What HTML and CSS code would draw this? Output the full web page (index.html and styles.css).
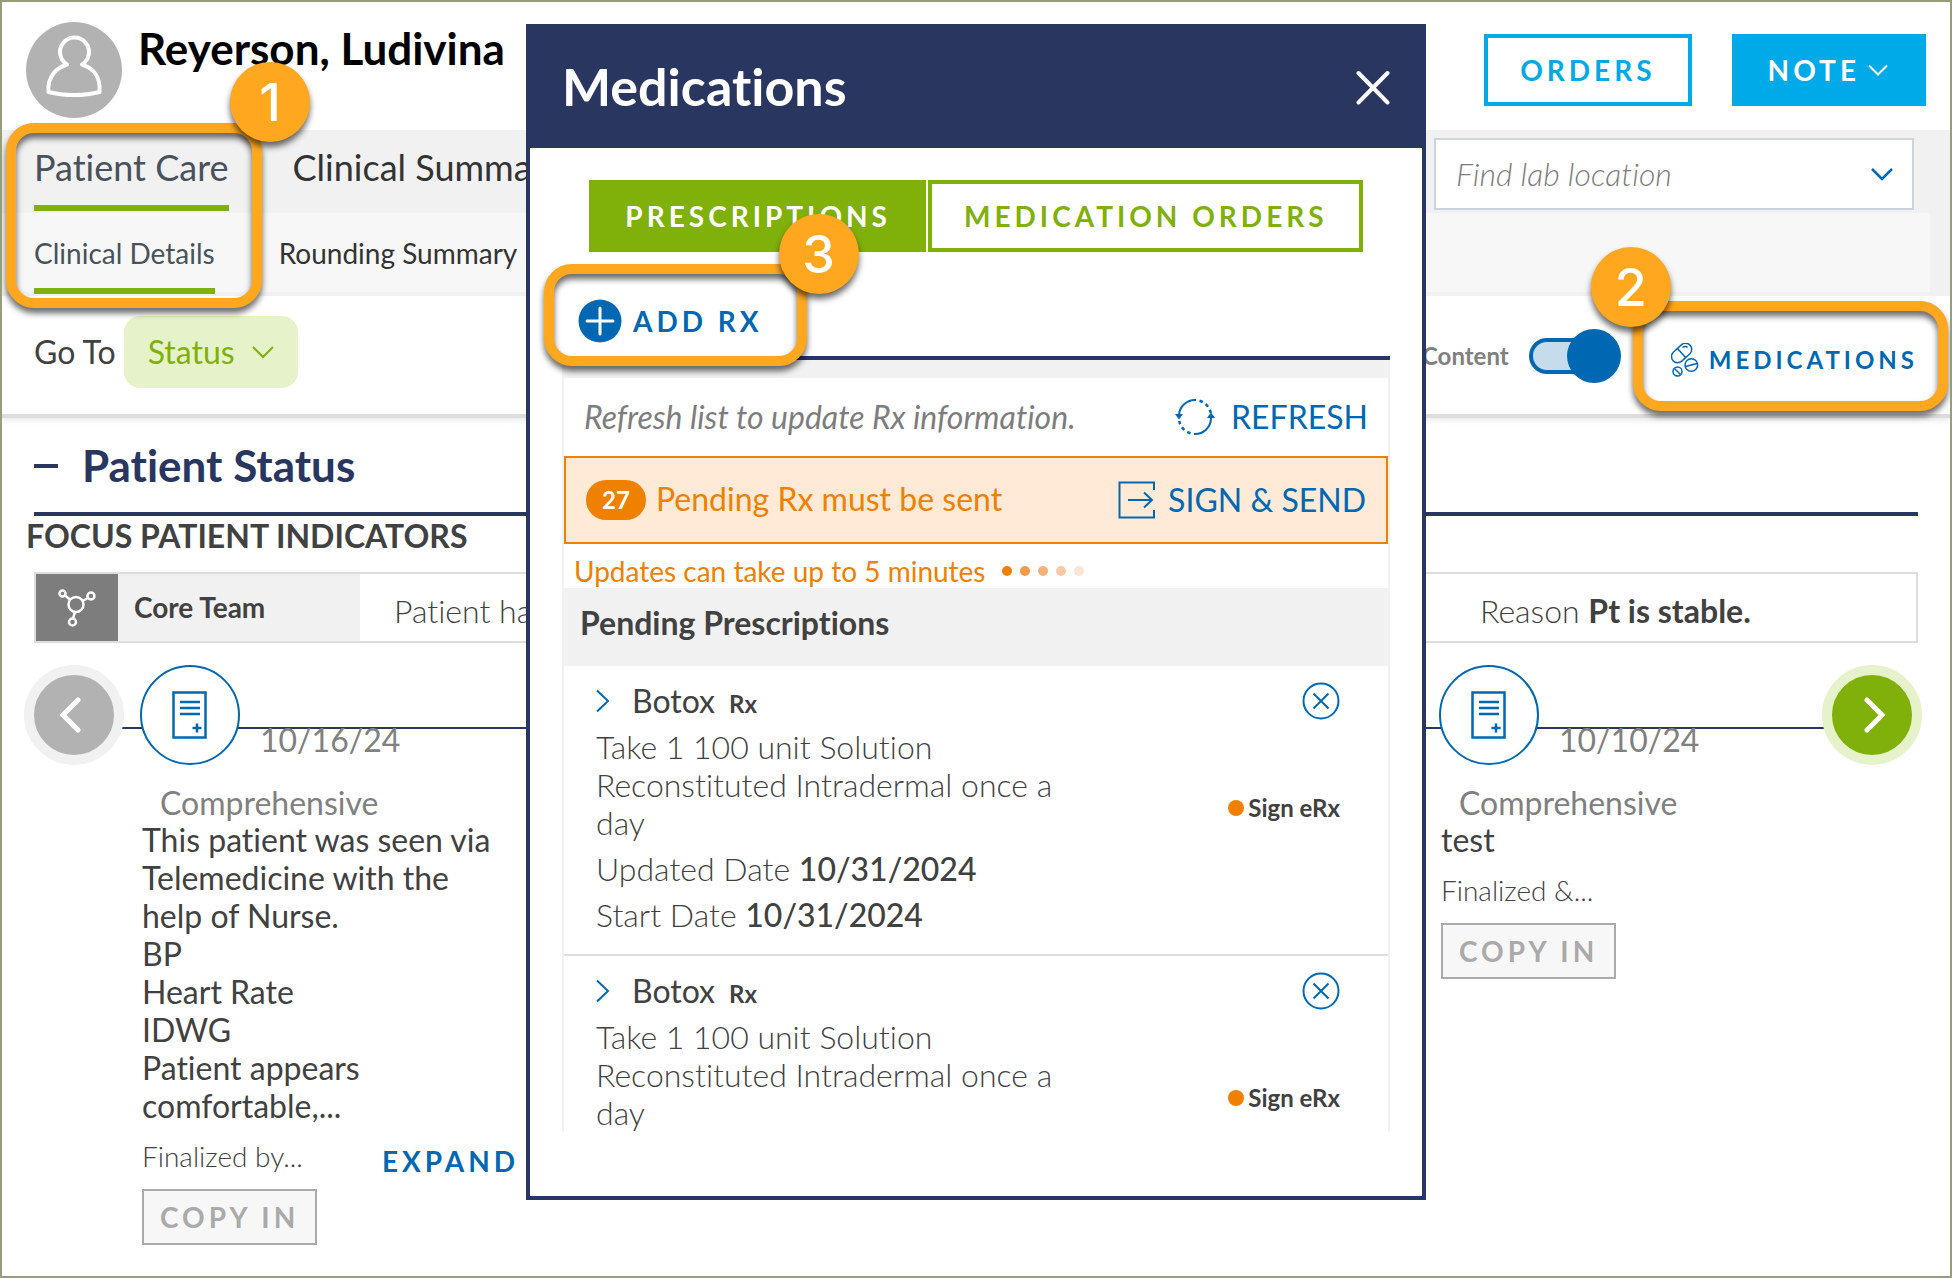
FILE: index.html
```html
<!DOCTYPE html>
<html lang="en">

<head>
  <meta charset="utf-8">
  <title>Patient Care</title>
  <link rel="stylesheet" href="styles.css">
</head>

<body>
  <div class="page">
    <header class="patient">
      <svg class="avatar" viewBox="0 0 96 96">
        <circle cx="48" cy="48" r="48" fill="#b2b2b2"/>
        <path d="M41 42.500a14.500 14.500 0 1 1 15 0c9.500 3 19 11 17.500 27.500-15 4-36 4-51 0C21 53.500 31.500 45.500 41 42.500z" fill="none" stroke="#fff" stroke-width="4" stroke-linejoin="round"/>
      </svg>
      <h1 class="patient-name">Reyerson, Ludivina</h1>
      <div class="patient-actions">
        <button class="btn btn-outline">ORDERS</button>
        <button class="btn btn-solid">NOTE
          <svg width="20" height="12" viewBox="0 0 20 12"><path d="M1 1.500l9 9 9-9" fill="none" stroke="currentColor" stroke-width="2"/></svg>
        </button>
      </div>
    </header>

    <nav class="tabs">
      <div class="tabs-row">
        <a class="tab active" href="#care">Patient Care</a>
        <a class="tab" href="#summary">Clinical Summary</a>
        <div class="lab-select">
          <select aria-label="Find lab location">
            <option>Find lab location</option>
          </select>
          <svg width="24" height="14" viewBox="0 0 24 14"><path d="M2 2l10 10L22 2" fill="none" stroke="#0068b3" stroke-width="2.500"/></svg>
        </div>
      </div>
      <div class="tabs-row subtabs">
        <a class="tab active" href="#details">Clinical Details</a>
        <a class="tab" href="#rounding">Rounding Summary</a>
      </div>
      <div class="callout callout-tabs">
        <div class="callout-frame"></div>
        <span class="callout-num">1</span>
      </div>
    </nav>

    <div class="toolbar">
      <label for="goto">Go To</label>
      <div class="goto-select">
        <select id="goto">
          <option>Status</option>
        </select>
        <svg width="24" height="14" viewBox="0 0 24 14"><path d="M2 2l10 10L22 2" fill="none" stroke="#80b00a" stroke-width="2"/></svg>
      </div>
      <div class="toolbar-right">
        <label class="content-label" for="content">Content</label>
        <input class="toggle" type="checkbox" id="content" checked>
        <div class="meds-wrap">
          <a class="meds-link" href="#medications">
            <svg width="28" height="34" viewBox="0 0 28 34" fill="none" stroke="#0068b3" stroke-width="1.500">
              <rect x="-11.500" y="-6.200" width="23" height="12.400" rx="6.200" transform="translate(10.600 10) rotate(-42)"/>
              <path d="M6.500 5.500l8 9M11.500 4.500c2-1.500 3.500-1.500 5 0"/>
              <circle cx="20.300" cy="22" r="6.300"/>
              <path d="M14.500 23.500l11.500-3"/>
              <circle cx="6.500" cy="28.500" r="4.500"/>
              <path d="M3.500 25.500l6 6"/>
            </svg>
            MEDICATIONS
          </a>
          <div class="callout callout-meds">
            <div class="callout-frame"></div>
            <span class="callout-num">2</span>
          </div>
        </div>
      </div>
    </div>

    <main>
      <div class="section-head">
        <button class="collapse" aria-label="Collapse"></button>
        <h2>Patient Status</h2>
      </div>
      <h3 class="focus-title">FOCUS PATIENT INDICATORS</h3>
      <div class="indicator">
        <div class="indicator-icon">
          <svg width="38" height="38" viewBox="0 0 38 38" fill="none" stroke="#fff" stroke-width="2.500">
            <circle cx="18" cy="15.500" r="7.500"/>
            <circle cx="4.500" cy="4.500" r="3"/>
            <circle cx="33" cy="7" r="3.500"/>
            <circle cx="14.500" cy="33" r="3.500"/>
            <path d="M7 6.500l5 4M24.500 12l5.500-3M17 23l-2 6.500"/>
          </svg>
        </div>
        <div class="indicator-label">Core Team</div>
        <div class="indicator-text">Patient has</div>
        <div class="indicator-reason">Reason <b>Pt is stable.</b></div>
      </div>

      <div class="visits">
        <button class="round-btn prev" aria-label="Previous">
          <svg width="30" height="36" viewBox="0 0 30 36"><path d="M19 3L4 18l15 15" fill="none" stroke="#fff" stroke-width="5" stroke-linecap="round"/></svg>
        </button>
        <article class="visit">
          <div class="visit-head">
            <div class="visit-icon">
              <svg width="36" height="48" viewBox="0 0 36 48" fill="none" stroke="#0068b3" stroke-width="2.500">
                <rect x="1.500" y="1.500" width="32" height="45"/>
                <path d="M8 11h20M8 17h20M8 23h20M25 32.500v9M20.500 37h9"/>
              </svg>
            </div>
            <time>10/16/24</time>
          </div>
          <p class="visit-type">Comprehensive</p>
          <p class="visit-note">This patient was seen via Telemedicine with the help of Nurse.<br>BP<br>Heart Rate<br>IDWG<br>Patient appears comfortable,...</p>
          <div class="visit-foot">
            <div class="visit-status">
              <p>Finalized by...</p>
              <button class="copy-btn" disabled>COPY IN</button>
            </div>
            <a class="expand" href="#expand">EXPAND</a>
          </div>
        </article>
        <article class="visit last">
          <div class="visit-head">
            <div class="visit-icon">
              <svg width="36" height="48" viewBox="0 0 36 48" fill="none" stroke="#0068b3" stroke-width="2.500">
                <rect x="1.500" y="1.500" width="32" height="45"/>
                <path d="M8 11h20M8 17h20M8 23h20M25 32.500v9M20.500 37h9"/>
              </svg>
            </div>
            <time>10/10/24</time>
          </div>
          <p class="visit-type">Comprehensive</p>
          <p class="visit-note">test</p>
          <div class="visit-foot">
            <div class="visit-status">
              <p>Finalized &amp;...</p>
              <button class="copy-btn" disabled>COPY IN</button>
            </div>
          </div>
        </article>
        <button class="round-btn next" aria-label="Next">
          <svg width="30" height="36" viewBox="0 0 30 36"><path d="M10 3l15 15-15 15" fill="none" stroke="#fff" stroke-width="5" stroke-linecap="round"/></svg>
        </button>
      </div>
    </main>

    <div class="overlay">
      <section class="modal" role="dialog" aria-labelledby="modal-title">
        <div class="modal-head">
          <h2 id="modal-title">Medications</h2>
          <button class="modal-close" aria-label="Close">
            <svg width="34" height="38" viewBox="0 0 34 38"><path d="M2.500 6l29 29.500M31.500 6L2.500 35.500" stroke="#fff" stroke-width="4" stroke-linecap="round"/></svg>
          </button>
        </div>
        <div class="modal-tabs">
          <button class="modal-tab selected">PRESCRIPTIONS</button>
          <button class="modal-tab">MEDICATION ORDERS</button>
        </div>
        <div class="add-row">
          <div class="add-wrap">
            <button class="add-btn">
              <svg width="44" height="44" viewBox="0 0 44 44"><circle cx="22" cy="22" r="21.500" fill="#0068b3"/><path d="M22 9v26M9 22h26" stroke="#fff" stroke-width="3" stroke-linecap="round"/></svg>
              ADD RX
            </button>
            <div class="callout callout-add">
              <div class="callout-frame"></div>
              <span class="callout-num">3</span>
            </div>
          </div>
        </div>

        <div class="rx-list">
          <div class="refresh-row">
            <em>Refresh list to update Rx information.</em>
            <button class="link-btn">
              <svg width="40" height="38" viewBox="0 0 40 38" fill="none" stroke="#0068b3" stroke-width="2">
                <path d="M4 17A16 16 0 0 1 21 2"/>
                <path d="M24.500 2.800a16 16 0 0 1 11.500 13" stroke-width="2.500" stroke-dasharray="3.500 3.500"/>
                <path d="M36 20a16 16 0 0 1-17 16"/>
                <path d="M15.500 35.200A16 16 0 0 1 4 22" stroke-width="2.500" stroke-dasharray="3.500 3.500"/>
                <path d="M0 16h8L4 21.500zM32 20h8L36 14.500z" fill="#0068b3" stroke="none"/>
              </svg>
              REFRESH
            </button>
          </div>
          <div class="alert">
            <span class="count">27</span>
            <span class="alert-text">Pending Rx must be sent</span>
            <button class="link-btn">
              <svg width="38" height="38" viewBox="0 0 38 38" fill="none" stroke="#0068b3" stroke-width="2">
                <path d="M36 9V1.500H1.500v35H36V29M10 19h24M26 11.500l8 7.500-8 7.500"/>
              </svg>
              SIGN &amp; SEND
            </button>
          </div>
          <div class="updates">Updates can take up to 5 minutes
            <span class="dots"><i></i><i></i><i></i><i></i><i></i></span>
          </div>
          <h3 class="list-title">Pending Prescriptions</h3>

          <div class="rx">
            <div class="rx-info">
              <div class="rx-name">
                <button class="icon-btn" aria-label="Open Botox"><svg width="14" height="24" viewBox="0 0 14 24"><path d="M1 1.500L12 12 1 22.500" fill="none" stroke="#0068b3" stroke-width="2"/></svg></button>
                <span>Botox</span> <small>Rx</small>
              </div>
              <p class="rx-sig">Take 1 100 unit Solution Reconstituted Intradermal once a day</p>
              <p>Updated Date <b>10/31/2024</b></p>
              <p>Start Date <b>10/31/2024</b></p>
            </div>
            <button class="icon-btn rx-remove" aria-label="Remove Botox">
              <svg width="38" height="38" viewBox="0 0 38 38" fill="none" stroke="#0068b3" stroke-width="2"><circle cx="19" cy="19" r="17.500"/><path d="M11.500 11.500l15 15M26.500 11.500l-15 15"/></svg>
            </button>
            <div class="rx-status">Sign eRx</div>
          </div>

          <div class="rx">
            <div class="rx-info">
              <div class="rx-name">
                <button class="icon-btn" aria-label="Open Botox"><svg width="14" height="24" viewBox="0 0 14 24"><path d="M1 1.500L12 12 1 22.500" fill="none" stroke="#0068b3" stroke-width="2"/></svg></button>
                <span>Botox</span> <small>Rx</small>
              </div>
              <p class="rx-sig">Take 1 100 unit Solution Reconstituted Intradermal once a day</p>
              <p>Updated Date <b>10/31/2024</b></p>
              <p>Start Date <b>10/31/2024</b></p>
            </div>
            <button class="icon-btn rx-remove" aria-label="Remove Botox">
              <svg width="38" height="38" viewBox="0 0 38 38" fill="none" stroke="#0068b3" stroke-width="2"><circle cx="19" cy="19" r="17.500"/><path d="M11.500 11.500l15 15M26.500 11.500l-15 15"/></svg>
            </button>
            <div class="rx-status">Sign eRx</div>
          </div>
        </div>
      </section>
    </div>
  </div>
</body>

</html>
```

FILE: styles.css
```css
* {
  box-sizing: border-box;
  margin: 0;
  padding: 0;
}

body {
  font-family: Lato, "Open Sans", sans-serif;
  font-size: 32px;
  font-variant-ligatures: none;
  line-height: 38px;
  color: #414141;
  background: #fff;
}

a {
  color: inherit;
  text-decoration: none;
}

button,
select {
  font: inherit;
  color: inherit;
  background: none;
  border: 0;
  border-radius: 0;
  cursor: pointer;
}

svg {
  display: block;
  flex: none;
}

.page {
  position: relative;
  min-height: 100vh;
  border: 2px solid #959e7b;
  overflow: hidden;
}

/* patient header */
.patient {
  display: flex;
  align-items: flex-start;
  gap: 16px;
  padding: 20px 24px 12px;
}

.avatar {
  width: 96px;
  height: 96px;
}

.patient-name {
  font-size: 44px;
  line-height: 53px;
  color: #000;
}

.patient-actions {
  display: flex;
  gap: 40px;
  margin: 12px 0 0 auto;
}

.btn {
  display: flex;
  align-items: center;
  height: 72px;
  padding: 0 32px;
  border: 4px solid #00a9e8;
  font-size: 28px;
  font-weight: 700;
  letter-spacing: 4px;
}

.btn-outline {
  color: #00a9e8;
}

.btn-solid {
  gap: 8px;
  padding: 0 34px 0 32px;
  background: #00a9e8;
  color: #fff;
}

/* tabs */
.tabs {
  position: relative;
  padding-bottom: 4px;
  background: #f1f1f1;
}

.tabs-row {
  display: flex;
  align-items: flex-start;
  gap: 64px;
  height: 83px;
  padding: 0 36px 0 32px;
}

.tab {
  padding: 16px 0;
  border-bottom: 6px solid transparent;
  font-size: 36px;
  line-height: 43px;
  color: #333;
}

.tab.active {
  border-color: #80b00a;
  color: #48525c;
}

.subtabs {
  height: 79px;
  margin-right: 20px;
  background: #f7f7f7;
}

.subtabs .tab {
  padding: 23px 0 18px;
  font-size: 28px;
  line-height: 34px;
}

.lab-select,
.goto-select {
  display: grid;
  align-items: center;
}

.lab-select select,
.goto-select select {
  grid-area: 1 / 1;
  width: 100%;
  height: 72px;
  appearance: none;
}

.lab-select svg,
.goto-select svg {
  grid-area: 1 / 1;
  justify-self: end;
  margin-right: 20px;
  pointer-events: none;
}

.lab-select {
  width: 480px;
  margin: 8px 0 0 auto;
}

.lab-select select {
  padding: 0 20px;
  border: 2px solid #ccd3de;
  background: #fff;
  font-style: italic;
  font-weight: 300;
  color: #7d7d7d;
}

/* toolbar */
.toolbar {
  display: flex;
  align-items: center;
  gap: 8px;
  padding: 20px 32px 26px;
  border-bottom: 4px solid #ddd;
  box-shadow: 0 2px 6px rgba(0, 0, 0, .1);
}

.goto-select {
  width: 174px;
}

.goto-select select {
  padding: 0 24px;
  border-radius: 16px;
  background: #e6f3ca;
  color: #80b00a;
}

.goto-select svg {
  margin-right: 23px;
}

.toolbar-right {
  display: flex;
  align-items: center;
  margin-left: auto;
  padding-top: 8px;
}

.content-label {
  font-size: 24px;
  font-weight: 700;
  color: #808080;
}

.toggle {
  position: relative;
  width: 92px;
  height: 54px;
  margin: 0 50px 0 20px;
  appearance: none;
  cursor: pointer;
}

.toggle::before {
  content: "";
  position: absolute;
  top: 9px;
  left: 0;
  width: 72px;
  height: 28px;
  border: 4px solid #0068b3;
  border-radius: 18px;
  background: #c6dcec;
}

.toggle::after {
  content: "";
  position: absolute;
  top: 0;
  right: 0;
  width: 54px;
  height: 54px;
  border-radius: 50%;
  background: #0068b3;
}

.meds-wrap,
.add-wrap {
  position: relative;
}

.meds-wrap {
  margin-top: 8px;
}

.meds-link {
  display: flex;
  align-items: center;
  gap: 10px;
  font-size: 24px;
  font-weight: 700;
  letter-spacing: 4px;
  color: #0068b3;
}

/* numbered callouts */
.callout {
  position: absolute;
  z-index: 1;
  pointer-events: none;
}

.callout-frame {
  height: 100%;
  border: 10px solid #ffa71e;
  border-radius: 28px;
  filter: drop-shadow(0 5px 3px rgba(0, 0, 0, .6));
}

.callout-num {
  position: absolute;
  width: 80px;
  height: 80px;
  border-radius: 50%;
  background: #ffa71e;
  box-shadow: 0 5px 6px rgba(0, 0, 0, .6);
  font: 500 52px/82px Inter, "Liberation Sans", sans-serif;
  text-align: center;
  color: #fff;
}

.callout-tabs {
  top: -7px;
  left: 4px;
  bottom: -12px;
  width: 256px;
}

.callout-tabs .callout-num {
  top: -61px;
  right: -48px;
}

.callout-meds {
  top: -40px;
  right: -30px;
  bottom: -32px;
  left: -38px;
}

.callout-meds .callout-num {
  top: -54px;
  left: -42px;
}

.callout-add {
  top: -35px;
  right: -44px;
  bottom: -23px;
  left: -34px;
}

.callout-add .callout-num {
  top: -50px;
  right: -52px;
}

/* patient status */
.section-head {
  display: flex;
  align-items: center;
  gap: 24px;
  margin: 0 32px;
  padding: 21px 0 20px;
  border-bottom: 4px solid #283660;
}

.section-head h2 {
  font-size: 44px;
  line-height: 53px;
  color: #283660;
}

.collapse {
  width: 24px;
  height: 4px;
  background: #283660;
}

.focus-title {
  margin: 0 24px;
  padding: 1px 0 17px;
  font-size: 32px;
}

.indicator {
  display: flex;
  height: 71px;
  margin: 0 32px;
  border: 2px solid #ddd;
  font-weight: 300;
  line-height: 73px;
}

.indicator b {
  font-weight: 700;
}

.indicator-icon {
  display: flex;
  align-items: center;
  justify-content: center;
  width: 82px;
  background: #7d7d7d;
}

.indicator-label {
  width: 242px;
  padding-left: 16px;
  background: #f1f1f1;
  font-size: 28px;
  font-weight: 700;
  line-height: 67px;
}

.indicator-text {
  flex: 1;
  padding-left: 34px;
}

.indicator-reason {
  width: 436px;
}

.visits {
  position: relative;
  display: flex;
  align-items: flex-start;
  margin-top: 22px;
  padding: 0 28px 0 22px;
}

/* timeline behind the circles */
.visits::before {
  content: "";
  position: absolute;
  top: 62px;
  right: 120px;
  left: 120px;
  height: 2px;
  background: #283660;
}

.round-btn {
  position: relative;
  display: flex;
  align-items: center;
  justify-content: center;
  width: 100px;
  height: 100px;
  border: 10px solid #f1f1f1;
  border-radius: 50%;
  background: #b2b2b2;
}

.prev {
  margin-right: 16px;
}

.next {
  border-color: #e6f3ca;
  background: #80b00a;
}

.visit {
  position: relative;
  flex: 1;
}

.visit.last {
  flex: none;
  width: 383px;
}

.visit-head {
  display: flex;
  align-items: flex-end;
  gap: 20px;
  color: #808080;
}

.visit-head time {
  padding-bottom: 6px;
}

.visit-icon {
  display: flex;
  align-items: center;
  justify-content: center;
  width: 100px;
  height: 100px;
  border: 2px solid #0068b3;
  border-radius: 50%;
  background: #fff;
}

.visit-type {
  margin: 20px 0 0 20px;
  line-height: 36px;
  color: #808080;
}

.visit-note {
  max-width: 360px;
  padding-left: 2px;
}

.visit-foot {
  display: flex;
  padding: 14px 0 0 2px;
}

.visit-status {
  width: 240px;
  font-size: 28px;
  font-weight: 300;
  line-height: 34px;
}

.copy-btn {
  height: 56px;
  margin-top: 16px;
  padding: 0 16px;
  border: 2px solid #aaa;
  background: #f7f7f7;
  font-weight: 700;
  letter-spacing: 4px;
  color: #aaa;
}

.expand {
  padding-top: 3px;
  font-size: 28px;
  font-weight: 700;
  letter-spacing: 4px;
  color: #0068b3;
}

/* medications modal */
.overlay {
  position: absolute;
  z-index: 2;
  top: 22px;
  right: 0;
  left: 0;
  display: flex;
  justify-content: center;
  pointer-events: none;
}

.modal {
  width: 900px;
  padding-bottom: 64px;
  border: 4px solid #283660;
  border-top: 0;
  background: #fff;
  pointer-events: auto;
}

.modal-head {
  display: flex;
  align-items: center;
  justify-content: space-between;
  height: 124px;
  padding: 0 32px;
  background: #283660;
  color: #fff;
}

.modal-head h2 {
  font-size: 52px;
  line-height: 62px;
}

.modal-tabs {
  display: flex;
  justify-content: center;
  gap: 2px;
  margin-top: 32px;
}

.modal-tab {
  height: 72px;
  padding: 0 31px 0 32px;
  border: 4px solid #80b00a;
  font-size: 28px;
  font-weight: 700;
  letter-spacing: 4px;
  color: #80b00a;
}

.modal-tab.selected {
  background: #80b00a;
  color: #fff;
}

.add-row {
  display: flex;
  margin: 0 32px;
  padding: 47px 0 13px 16px;
  border-bottom: 4px solid #283660;
}

.add-btn {
  display: flex;
  align-items: center;
  gap: 11px;
  font-size: 28px;
  font-weight: 700;
  letter-spacing: 4px;
  color: #0068b3;
}

.rx-list {
  height: 772px;
  margin: 0 32px;
  border: 2px solid #f1f1f1;
  border-width: 18px 2px 0;
  overflow-y: auto;
  scrollbar-width: none;
}

.refresh-row {
  display: flex;
  align-items: center;
  justify-content: space-between;
  height: 78px;
  padding: 0 20px;
  color: #7d7d7d;
}

.link-btn {
  display: flex;
  align-items: center;
  gap: 16px;
  color: #0068b3;
}

.alert {
  display: flex;
  align-items: center;
  gap: 10px;
  height: 88px;
  padding: 0 20px;
  border: 2px solid #f08000;
  background: #feead7;
  color: #f08000;
}

.alert-text {
  padding-bottom: 3px;
}

.alert .link-btn {
  gap: 12px;
  margin-left: auto;
}

.count {
  width: 60px;
  height: 40px;
  border-radius: 20px;
  background: #f08000;
  font-size: 24px;
  font-weight: 700;
  line-height: 40px;
  text-align: center;
  color: #fff;
}

.updates {
  display: flex;
  align-items: center;
  gap: 16px;
  height: 44px;
  padding: 10px 10px 0;
  font-size: 28px;
  color: #f08000;
}

.dots {
  display: flex;
  gap: 8px;
}

.dots i {
  width: 10px;
  height: 10px;
  border-radius: 50%;
  background: #f08000;
}

.dots i:nth-child(2) {
  background: #f39b49;
}

.dots i:nth-child(3) {
  background: #f6b27a;
}

.dots i:nth-child(4) {
  background: #facaa6;
}

.dots i:nth-child(5) {
  background: #fde4d3;
}

.list-title {
  padding: 16px 16px 24px;
  background: #f1f1f1;
  font-size: 32px;
}

.rx {
  display: grid;
  grid-template-columns: 1fr auto;
  padding: 16px 48px 20px 32px;
  border-bottom: 2px solid #ddd;
}

.rx-info {
  grid-area: 1 / 1;
  font-weight: 300;
}

.rx-info p {
  margin-top: 8px;
}

.rx-sig {
  max-width: 480px;
}

.rx b {
  font-weight: 500;
}

.rx-name {
  display: flex;
  align-items: baseline;
  height: 38px;
  font-weight: 400;
}

.rx-name .icon-btn {
  align-self: center;
  margin-right: 22px;
}

.rx-name small {
  margin-left: 14px;
  font-size: 24px;
  font-weight: 700;
}

.rx-remove {
  grid-area: 1 / 2;
  align-self: start;
  justify-self: end;
}

.rx-status {
  grid-area: 1 / 2;
  display: flex;
  align-items: center;
  align-self: center;
  gap: 4px;
  font-size: 24px;
  font-weight: 700;
}

.rx-status::before {
  content: "";
  width: 16px;
  height: 16px;
  border-radius: 50%;
  background: #f08000;
}
```
